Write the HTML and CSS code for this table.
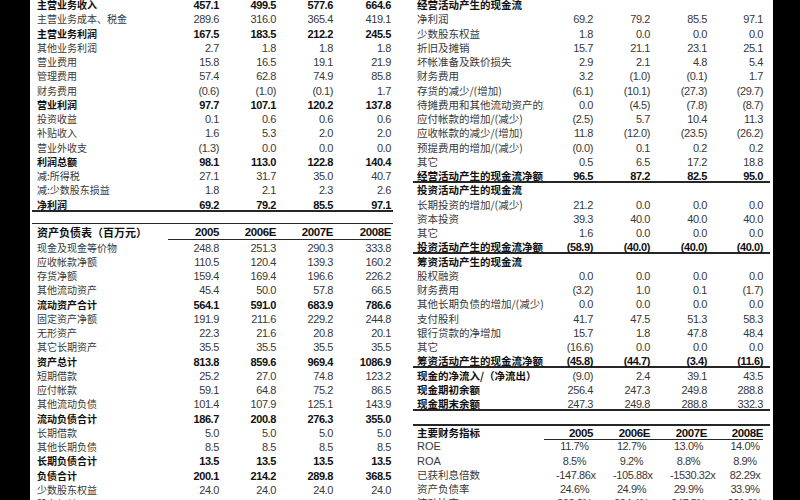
FILE: index.html
```html
<!DOCTYPE html>
<html lang="zh-CN">
<head>
<meta charset="utf-8">
<title>财务报表</title>
<link rel="stylesheet" href="styles.css">
</head>
<body>
<div class="screen">
  <div class="edge-l"></div>
  <div class="sheet">
    <div class="tbl tbl-l">
      <div class="row"><div class="lbl b">主营业务收入</div><div class="num b">457.1</div><div class="num b">499.5</div><div class="num b">577.6</div><div class="num b">664.6</div></div>
      <div class="row"><div class="lbl">主营业务成本、税金</div><div class="num">289.6</div><div class="num">316.0</div><div class="num">365.4</div><div class="num">419.1</div></div>
      <div class="row"><div class="lbl b">主营业务利润</div><div class="num b">167.5</div><div class="num b">183.5</div><div class="num b">212.2</div><div class="num b">245.5</div></div>
      <div class="row"><div class="lbl">其他业务利润</div><div class="num">2.7</div><div class="num">1.8</div><div class="num">1.8</div><div class="num">1.8</div></div>
      <div class="row"><div class="lbl">营业费用</div><div class="num">15.8</div><div class="num">16.5</div><div class="num">19.1</div><div class="num">21.9</div></div>
      <div class="row"><div class="lbl">管理费用</div><div class="num">57.4</div><div class="num">62.8</div><div class="num">74.9</div><div class="num">85.8</div></div>
      <div class="row"><div class="lbl">财务费用</div><div class="num">(0.6)</div><div class="num">(1.0)</div><div class="num">(0.1)</div><div class="num">1.7</div></div>
      <div class="row"><div class="lbl b">营业利润</div><div class="num b">97.7</div><div class="num b">107.1</div><div class="num b">120.2</div><div class="num b">137.8</div></div>
      <div class="row"><div class="lbl">投资收益</div><div class="num">0.1</div><div class="num">0.6</div><div class="num">0.6</div><div class="num">0.6</div></div>
      <div class="row"><div class="lbl">补贴收入</div><div class="num">1.6</div><div class="num">5.3</div><div class="num">2.0</div><div class="num">2.0</div></div>
      <div class="row"><div class="lbl">营业外收支</div><div class="num">(1.3)</div><div class="num">0.0</div><div class="num">0.0</div><div class="num">0.0</div></div>
      <div class="row"><div class="lbl b">利润总额</div><div class="num b">98.1</div><div class="num b">113.0</div><div class="num b">122.8</div><div class="num b">140.4</div></div>
      <div class="row"><div class="lbl">减:所得税</div><div class="num">27.1</div><div class="num">31.7</div><div class="num">35.0</div><div class="num">40.7</div></div>
      <div class="row"><div class="lbl">减:少数股东损益</div><div class="num">1.8</div><div class="num">2.1</div><div class="num">2.3</div><div class="num">2.6</div></div>
      <div class="row rule"><div class="lbl b">净利润</div><div class="num b">69.2</div><div class="num b">79.2</div><div class="num b">85.5</div><div class="num b">97.1</div></div>
      <div class="row gap-l thin-rule"></div>
      <div class="row hdr-l"><div class="lbl hlbl b">资产负债表（百万元）</div><div class="num yr">2005</div><div class="num yr">2006E</div><div class="num yr">2007E</div><div class="num yr">2008E</div></div>
      <div class="row"><div class="lbl">现金及现金等价物</div><div class="num">248.8</div><div class="num">251.3</div><div class="num">290.3</div><div class="num">333.8</div></div>
      <div class="row"><div class="lbl">应收帐款净额</div><div class="num">110.5</div><div class="num">120.4</div><div class="num">139.3</div><div class="num">160.2</div></div>
      <div class="row"><div class="lbl">存货净额</div><div class="num">159.4</div><div class="num">169.4</div><div class="num">196.6</div><div class="num">226.2</div></div>
      <div class="row"><div class="lbl">其他流动资产</div><div class="num">45.4</div><div class="num">50.0</div><div class="num">57.8</div><div class="num">66.5</div></div>
      <div class="row"><div class="lbl b">流动资产合计</div><div class="num b">564.1</div><div class="num b">591.0</div><div class="num b">683.9</div><div class="num b">786.6</div></div>
      <div class="row"><div class="lbl">固定资产净额</div><div class="num">191.9</div><div class="num">211.6</div><div class="num">229.2</div><div class="num">244.8</div></div>
      <div class="row"><div class="lbl">无形资产</div><div class="num">22.3</div><div class="num">21.6</div><div class="num">20.8</div><div class="num">20.1</div></div>
      <div class="row"><div class="lbl">其它长期资产</div><div class="num">35.5</div><div class="num">35.5</div><div class="num">35.5</div><div class="num">35.5</div></div>
      <div class="row"><div class="lbl b">资产总计</div><div class="num b">813.8</div><div class="num b">859.6</div><div class="num b">969.4</div><div class="num b">1086.9</div></div>
      <div class="row"><div class="lbl">短期借款</div><div class="num">25.2</div><div class="num">27.0</div><div class="num">74.8</div><div class="num">123.2</div></div>
      <div class="row"><div class="lbl">应付帐款</div><div class="num">59.1</div><div class="num">64.8</div><div class="num">75.2</div><div class="num">86.5</div></div>
      <div class="row"><div class="lbl">其他流动负债</div><div class="num">101.4</div><div class="num">107.9</div><div class="num">125.1</div><div class="num">143.9</div></div>
      <div class="row"><div class="lbl b">流动负债合计</div><div class="num b">186.7</div><div class="num b">200.8</div><div class="num b">276.3</div><div class="num b">355.0</div></div>
      <div class="row"><div class="lbl">长期借款</div><div class="num">5.0</div><div class="num">5.0</div><div class="num">5.0</div><div class="num">5.0</div></div>
      <div class="row"><div class="lbl">其他长期负债</div><div class="num">8.5</div><div class="num">8.5</div><div class="num">8.5</div><div class="num">8.5</div></div>
      <div class="row"><div class="lbl b">长期负债合计</div><div class="num b">13.5</div><div class="num b">13.5</div><div class="num b">13.5</div><div class="num b">13.5</div></div>
      <div class="row"><div class="lbl b">负债合计</div><div class="num b">200.1</div><div class="num b">214.2</div><div class="num b">289.8</div><div class="num b">368.5</div></div>
      <div class="row"><div class="lbl">少数股东权益</div><div class="num">24.0</div><div class="num">24.0</div><div class="num">24.0</div><div class="num">24.0</div></div>
      <div class="row"><div class="lbl">股东权益</div><div class="num">589.7</div><div class="num">621.4</div><div class="num">655.6</div><div class="num">694.4</div></div>
    </div>

    <div class="tbl tbl-r">
      <div class="row"><div class="lbl b">经营活动产生的现金流</div></div>
      <div class="row"><div class="lbl">净利润</div><div class="num">69.2</div><div class="num">79.2</div><div class="num">85.5</div><div class="num">97.1</div></div>
      <div class="row"><div class="lbl">少数股东权益</div><div class="num">1.8</div><div class="num">0.0</div><div class="num">0.0</div><div class="num">0.0</div></div>
      <div class="row"><div class="lbl">折旧及摊销</div><div class="num">15.7</div><div class="num">21.1</div><div class="num">23.1</div><div class="num">25.1</div></div>
      <div class="row"><div class="lbl">坏帐准备及跌价损失</div><div class="num">2.9</div><div class="num">2.1</div><div class="num">4.8</div><div class="num">5.4</div></div>
      <div class="row"><div class="lbl">财务费用</div><div class="num">3.2</div><div class="num">(1.0)</div><div class="num">(0.1)</div><div class="num">1.7</div></div>
      <div class="row"><div class="lbl">存货的减少/(增加)</div><div class="num">(6.1)</div><div class="num">(10.1)</div><div class="num">(27.3)</div><div class="num">(29.7)</div></div>
      <div class="row"><div class="lbl">待摊费用和其他流动资产的减少</div><div class="num">0.0</div><div class="num">(4.5)</div><div class="num">(7.8)</div><div class="num">(8.7)</div></div>
      <div class="row"><div class="lbl">应付帐款的增加/(减少)</div><div class="num">(2.5)</div><div class="num">5.7</div><div class="num">10.4</div><div class="num">11.3</div></div>
      <div class="row"><div class="lbl">应收帐款的减少/(增加)</div><div class="num">11.8</div><div class="num">(12.0)</div><div class="num">(23.5)</div><div class="num">(26.2)</div></div>
      <div class="row"><div class="lbl">预提费用的增加/(减少)</div><div class="num">(0.0)</div><div class="num">0.1</div><div class="num">0.2</div><div class="num">0.2</div></div>
      <div class="row"><div class="lbl">其它</div><div class="num">0.5</div><div class="num">6.5</div><div class="num">17.2</div><div class="num">18.8</div></div>
      <div class="row rule"><div class="lbl b">经营活动产生的现金流净额</div><div class="num b">96.5</div><div class="num b">87.2</div><div class="num b">82.5</div><div class="num b">95.0</div></div>
      <div class="row"><div class="lbl b">投资活动产生的现金流</div></div>
      <div class="row"><div class="lbl">长期投资的增加/(减少)</div><div class="num">21.2</div><div class="num">0.0</div><div class="num">0.0</div><div class="num">0.0</div></div>
      <div class="row"><div class="lbl">资本投资</div><div class="num">39.3</div><div class="num">40.0</div><div class="num">40.0</div><div class="num">40.0</div></div>
      <div class="row"><div class="lbl">其它</div><div class="num">1.6</div><div class="num">0.0</div><div class="num">0.0</div><div class="num">0.0</div></div>
      <div class="row rule"><div class="lbl b">投资活动产生的现金流净额</div><div class="num b">(58.9)</div><div class="num b">(40.0)</div><div class="num b">(40.0)</div><div class="num b">(40.0)</div></div>
      <div class="row"><div class="lbl b">筹资活动产生的现金流</div></div>
      <div class="row"><div class="lbl">股权融资</div><div class="num">0.0</div><div class="num">0.0</div><div class="num">0.0</div><div class="num">0.0</div></div>
      <div class="row"><div class="lbl">财务费用</div><div class="num">(3.2)</div><div class="num">1.0</div><div class="num">0.1</div><div class="num">(1.7)</div></div>
      <div class="row"><div class="lbl">其他长期负债的增加/(减少)</div><div class="num">0.0</div><div class="num">0.0</div><div class="num">0.0</div><div class="num">0.0</div></div>
      <div class="row"><div class="lbl">支付股利</div><div class="num">41.7</div><div class="num">47.5</div><div class="num">51.3</div><div class="num">58.3</div></div>
      <div class="row"><div class="lbl">银行贷款的净增加</div><div class="num">15.7</div><div class="num">1.8</div><div class="num">47.8</div><div class="num">48.4</div></div>
      <div class="row"><div class="lbl">其它</div><div class="num">(16.6)</div><div class="num">0.0</div><div class="num">0.0</div><div class="num">0.0</div></div>
      <div class="row rule"><div class="lbl b">筹资活动产生的现金流净额</div><div class="num b">(45.8)</div><div class="num b">(44.7)</div><div class="num b">(3.4)</div><div class="num b">(11.6)</div></div>
      <div class="row"><div class="lbl b">现金的净流入/（净流出）</div><div class="num">(9.0)</div><div class="num">2.4</div><div class="num">39.1</div><div class="num">43.5</div></div>
      <div class="row"><div class="lbl b">现金期初余额</div><div class="num">256.4</div><div class="num">247.3</div><div class="num">249.8</div><div class="num">288.8</div></div>
      <div class="row rule"><div class="lbl b">现金期末余额</div><div class="num">247.3</div><div class="num">249.8</div><div class="num">288.8</div><div class="num">332.3</div></div>
      <div class="row gap-r rule"></div>
      <div class="row hdr-r"><div class="lbl b">主要财务指标</div><div class="num yr">2005</div><div class="num yr">2006E</div><div class="num yr">2007E</div><div class="num yr">2008E</div></div>
      <div class="row ratio"><div class="lbl latin">ROE</div><div class="num">11.7%</div><div class="num">12.7%</div><div class="num">13.0%</div><div class="num">14.0%</div></div>
      <div class="row ratio"><div class="lbl latin">ROA</div><div class="num">8.5%</div><div class="num">9.2%</div><div class="num">8.8%</div><div class="num">8.9%</div></div>
      <div class="row ratio"><div class="lbl">已获利息倍数</div><div class="num">-147.86x</div><div class="num">-105.88x</div><div class="num">-1530.32x</div><div class="num">82.29x</div></div>
      <div class="row ratio"><div class="lbl">资产负债率</div><div class="num">24.6%</div><div class="num">24.9%</div><div class="num">29.9%</div><div class="num">33.9%</div></div>
      <div class="row ratio"><div class="lbl">流动比率</div><div class="num">302.2%</div><div class="num">294.4%</div><div class="num">247.5%</div><div class="num">221.6%</div></div>
    </div>
  </div>
  <div class="edge-r"></div>
</div>
</body>
</html>
```

FILE: styles.css
```css
* {
  box-sizing: border-box;
}

html,
body {
  margin: 0;
  padding: 0;
  background: #fff;
}

body {
  width: 800px;
  height: 500px;
  overflow: hidden;
}

.screen {
  display: flex;
  width: 800px;
  height: 500px;
  overflow: hidden;
}

.edge-l {
  flex: none;
  width: 30px;
  background: #000;
}

.edge-r {
  flex: none;
  width: 27px;
  background: #000;
}

.sheet {
  flex: 1;
  display: flex;
  align-items: flex-start;
  gap: 20px;
  padding-left: 2px;
  margin-top: -2.125px;
}

.tbl {
  display: flex;
  flex-direction: column;
  flex: none;
}

.tbl-l {
  width: 361px;
}

.tbl-r {
  width: 357px;
}

.row {
  display: grid;
  flex: none;
  height: 14.25px;
  align-items: center;
  color: #383838;
  font-family: "Liberation Sans", Arial, sans-serif;
  font-size: 11px;
  letter-spacing: -0.4px;
  line-height: 14px;
}

.tbl-l .row {
  grid-template-columns: 136px 51px 57px 57px 58px;
}

.tbl-r .row {
  grid-template-columns: 131px 49px 57px 57px 56px;
}

.lbl {
  font-family: "Noto Sans CJK SC", "Noto Sans", sans-serif;
  font-size: 10px;
  letter-spacing: 0;
  white-space: nowrap;
  overflow: hidden;
  padding-left: 5px;
}

.tbl-r .lbl {
  padding-left: 4px;
  font-size: 10.5px;
}

.tbl-r .lbl.latin {
  font-family: "Liberation Sans", Arial, sans-serif;
  font-size: 11px;
}

.num {
  text-align: right;
  white-space: nowrap;
}

.b {
  font-weight: 700;
  color: #111;
}

.rule {
  box-shadow: inset 0 -2px 0 #262626;
}

.thin-rule {
  box-shadow: inset 0 -1px 0 #262626;
}

.gap-l {
  height: 12px;
}

.hdr-l {
  height: 16.75px;
}

.gap-r {
  height: 15px;
}

.hdr-r {
  height: 13px;
}

.hlbl {
  font-size: 11px;
}

.yr {
  font-weight: 700;
  color: #111;
  font-size: 11.5px;
  box-shadow: inset 0 -1px 0 #262626;
  align-self: stretch;
  display: flex;
  align-items: center;
  justify-content: flex-end;
}

.ratio .num {
  text-align: center;
  padding-left: 20px;
}

.tbl-r .ratio .num:nth-child(2) {
  padding-left: 12px;
}
```
